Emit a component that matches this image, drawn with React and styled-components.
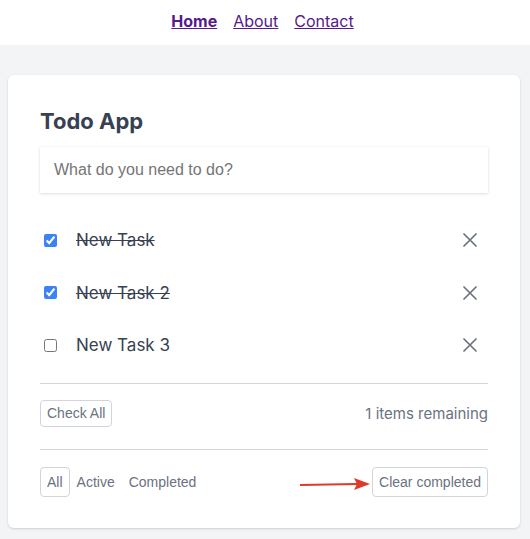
import React from "react";
import styled, { createGlobalStyle } from "styled-components";

const Global = createGlobalStyle`
  html, body { margin: 0; padding: 0; background: #f3f4f6; }
  body { font-family: Inter, "Noto Sans", sans-serif; }
  * { box-sizing: border-box; }
`;

const Nav = styled.nav`
  height: 45px;
  background: #ffffff;
  display: flex;
  justify-content: center;
  align-items: center;
  gap: 16px;
  padding-bottom: 3px;
  padding-right: 5px;
`;

const NavLink = styled.a`
  font-family: Inter, sans-serif;
  font-size: 16px;
  color: #551a8b;
  text-decoration: underline;
  font-weight: ${(p) => (p.$active ? 700 : 400)};
`;

const Main = styled.main`
  padding: 30px 10px 12px 8px;
`;

const Card = styled.section`
  background: #fff;
  border-radius: 6px;
  box-shadow: 0 1px 3px rgba(0, 0, 0, 0.1), 0 1px 2px rgba(0, 0, 0, 0.06);
  padding: 30px 32px 31px;
`;

const Title = styled.h1`
  margin: 0 0 10px;
  font-size: 22px;
  line-height: 32px;
  font-weight: 700;
  color: #374151;
`;

const Input = styled.input`
  width: 100%;
  height: 46px;
  border: none;
  outline: none;
  padding: 0 14px;
  font-family: "Liberation Sans", Arial, sans-serif;
  font-size: 16px;
  color: #374151;
  box-shadow: 0 1px 3px rgba(0, 0, 0, 0.12), 0 0 1px rgba(0, 0, 0, 0.08);
  &::placeholder { color: #757575; }
`;

const List = styled.ul`
  list-style: none;
  margin: 21px 0 11px;
  padding: 0;
`;

const Row = styled.li`
  height: 52.5px;
  display: flex;
  align-items: center;
  padding: 0 4px;
`;

const Check = styled.input`
  margin: 0;
  width: 13px;
  height: 13px;
  accent-color: #3b82f6;
`;

const TaskText = styled.span`
  flex: 1;
  margin-left: 19px;
  font-size: 17px;
  color: #374151;
  text-decoration: ${(p) => (p.$done ? "line-through" : "none")};
`;

const RemoveBtn = styled.button`
  border: none;
  background: none;
  padding: 0;
  margin-right: 7px;
  display: flex;
  color: #6b7280;
`;

const Divider = styled.hr`
  border: none;
  border-top: 1px solid #d1d5db;
  margin: 0;
`;

const Bar = styled.div`
  position: relative;
  display: flex;
  align-items: center;
  justify-content: space-between;
  padding: ${(p) => p.$pad};
`;

const Btn = styled.button`
  font-family: "Liberation Sans", Arial, sans-serif;
  font-size: 14px;
  color: #6b7280;
  background: #fff;
  border: 1px solid ${(p) => (p.$plain ? "transparent" : "#d1d5db")};
  border-radius: 4px;
  height: ${(p) => p.$h || 30}px;
  padding: 0 6px;
  cursor: pointer;
`;

const Remaining = styled.span`
  font-size: 15px;
  color: #6b7280;
`;

const Filters = styled.div`
  display: flex;
  gap: 0;
`;

const Arrow = styled.svg`
  position: absolute;
  left: 259px;
  top: 27px;
`;

const X = () => (
  <svg width="14" height="14" viewBox="0 0 14 14" fill="none" stroke="currentColor" strokeWidth="1.7" strokeLinecap="round">
    <path d="M1 1 L13 13 M13 1 L1 13" />
  </svg>
);

const tasks = [
  { text: "New Task", done: true },
  { text: "New Task 2", done: true },
  { text: "New Task 3", done: false },
];

export default function App() {
  return (
    <>
      <Global />
      <Nav>
        <NavLink href="#" $active>Home</NavLink>
        <NavLink href="#">About</NavLink>
        <NavLink href="#">Contact</NavLink>
      </Nav>
      <Main>
        <Card>
          <Title>Todo App</Title>
          <Input placeholder="What do you need to do?" />
          <List>
            {tasks.map((t) => (
              <Row key={t.text}>
                <Check type="checkbox" defaultChecked={t.done} />
                <TaskText $done={t.done}>{t.text}</TaskText>
                <RemoveBtn aria-label="remove"><X /></RemoveBtn>
              </Row>
            ))}
          </List>
          <Divider />
          <Bar $pad="16px 0 22px">
            <Btn $h={27}>Check All</Btn>
            <Remaining>1 items remaining</Remaining>
          </Bar>
          <Divider />
          <Bar $pad="17px 0 0">
            <Filters>
              <Btn>All</Btn>
              <Btn $plain>Active</Btn>
              <Btn $plain>Completed</Btn>
            </Filters>
            <Btn>Clear completed</Btn>
            <Arrow width="72" height="14" viewBox="0 0 72 14">
              <path d="M1 8 L58 7" stroke="#e0382b" strokeWidth="2" />
              <path d="M55 1 L71 7 L55 13 L58 7 Z" fill="#e0382b" />
            </Arrow>
          </Bar>
        </Card>
      </Main>
    </>
  );
}
